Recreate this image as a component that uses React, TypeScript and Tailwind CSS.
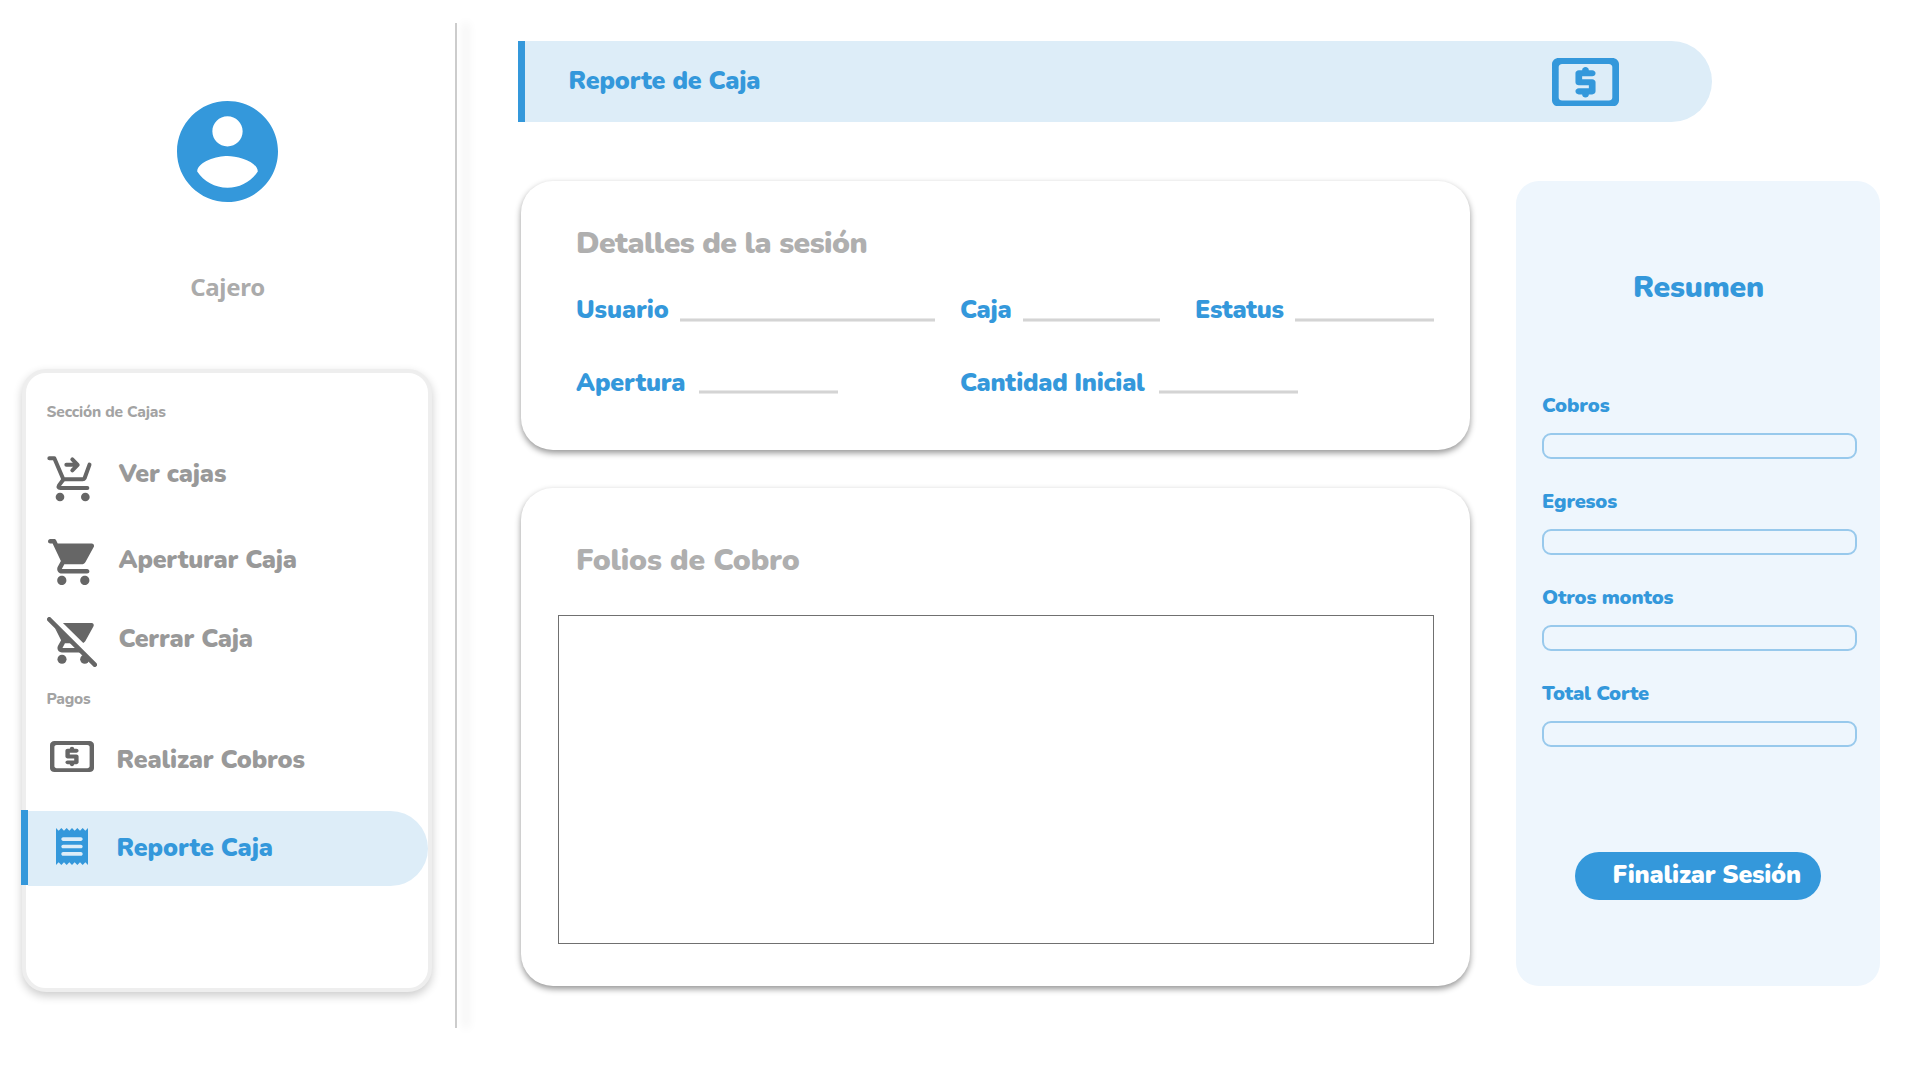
import React from "react";

function UserIcon() {
  return (
    <svg viewBox="2 2 20 20" className="h-[101px] w-[101px] fill-[#3498db]">
      <path
        fillRule="evenodd"
        d="M12 2C6.48 2 2 6.48 2 12s4.48 10 10 10 10-4.48 10-10S17.52 2 12 2zm0 3c1.66 0 3 1.34 3 3s-1.34 3-3 3-3-1.34-3-3 1.34-3 3-3zm0 14.2c-2.5 0-4.71-1.28-6-3.22.03-1.99 4-3.08 6-3.08 1.99 0 5.97 1.09 6 3.08-1.29 1.94-3.5 3.22-6 3.22z"
      />
    </svg>
  );
}

function CartArrowIcon() {
  return (
    <svg
      viewBox="140 317 138 138"
      className="h-[46px] w-[46px] shrink-0"
      fill="none"
      stroke="#666"
      strokeWidth="12"
      strokeLinecap="round"
      strokeLinejoin="round"
    >
      <path d="M147 324H162L189 387H247Q251 387 253 383L267.500 343" />
      <path d="M188 389L176 405Q172 413 180 413H261" />
      <path d="M198 343.500H231M216 327L232 343.500L216 360" />
      <circle cx="179" cy="440" r="13" fill="#666" stroke="none" />
      <circle cx="255" cy="440" r="13" fill="#666" stroke="none" />
    </svg>
  );
}

function CartIcon() {
  return (
    <svg viewBox="1 2 20 20" className="h-[46px] w-[46px] shrink-0 fill-[#666]">
      <path d="M7 18c-1.1 0-1.99.9-1.99 2S5.9 22 7 22s2-.9 2-2-.9-2-2-2zM1 3c0 .55.45 1 1 1h1l3.600 7.590-1.350 2.440C4.520 15.370 5.480 17 7 17h11c.55 0 1-.45 1-1s-.45-1-1-1H7l1.100-2h7.450c.75 0 1.410-.41 1.750-1.030l3.580-6.490c.37-.66-.11-1.480-.87-1.480H5.210l-.67-1.430c-.16-.35-.52-.57-.9-.57H2c-.55 0-1 .45-1 1zm16 15c-1.100 0-1.990.9-1.990 2s.89 2 1.990 2 2-.9 2-2-.9-2-2-2z" />
    </svg>
  );
}

function CartOffIcon() {
  return (
    <svg viewBox="0.400 1.400 22 22" className="h-[50px] w-[50px] shrink-0 fill-[#666]">
      <path d="M7.400 4H20c.77 0 1.240.82.87 1.480L17.300 11.970c-.2.360-.52.66-.95.830z" />
      <path d="M3.900 6.200L6.600 11.590 5.250 14.040C4.520 15.370 5.480 17 7 17H16l-2-2H7.200L8.300 13h3.400z" />
      <circle cx="7" cy="20" r="2" />
      <circle cx="17" cy="20" r="2" />
      <path d="M1.400 2.400L21.400 22.400" stroke="#666" strokeWidth="2" strokeLinecap="round" />
    </svg>
  );
}

function CashIcon({ className }: { className: string }) {
  return (
    <svg viewBox="2 4 20 16" preserveAspectRatio="none" className={className} fill="currentColor">
      <path d="M12 17c.55 0 1-.45 1-1h1c.55 0 1-.45 1-1v-3c0-.55-.45-1-1-1h-3v-1h3c.55 0 1-.45 1-1s-.45-1-1-1h-1c0-.55-.45-1-1-1s-1 .45-1 1h-1c-.55 0-1 .45-1 1v3c0 .55.45 1 1 1h3v1h-3c-.55 0-1 .45-1 1s.45 1 1 1h1c0 .55.45 1 1 1zm8-13H4c-1.110 0-1.990.89-1.990 2L2 18c0 1.110.89 2 2 2h16c1.110 0 2-.89 2-2V6c0-1.110-.89-2-2-2zm-1 14H5c-.55 0-1-.45-1-1V7c0-.55.45-1 1-1h14c.55 0 1 .45 1 1v10c0 .55-.45 1-1 1z" />
    </svg>
  );
}

function ReceiptIcon() {
  return (
    <svg
      viewBox="3 2 18 20"
      preserveAspectRatio="none"
      className="mt-[17px] ml-7 h-[37px] w-8 shrink-0 fill-[#3498db]"
    >
      <path
        fillRule="evenodd"
        d="M19.500 3.500L18 2l-1.500 1.500L15 2l-1.500 1.500L12 2l-1.500 1.500L9 2 7.500 3.500 6 2 4.500 3.500 3 2v20l1.500-1.500L6 22l1.500-1.500L9 22l1.500-1.500L12 22l1.500-1.500L15 22l1.500-1.500L18 22l1.500-1.500L21 22V2zM17 17H7c-.55 0-1-.45-1-1s.45-1 1-1h10c.55 0 1 .45 1 1s-.45 1-1 1zm0-4H7c-.55 0-1-.45-1-1s.45-1 1-1h10c.55 0 1 .45 1 1s-.45 1-1 1zm0-4H7c-.55 0-1-.45-1-1s.45-1 1-1h10c.55 0 1 .45 1 1s-.45 1-1 1z"
      />
    </svg>
  );
}

function Blank({ className }: { className: string }) {
  return <div className={`h-1 shrink-0 border-y border-[#e8e8e8] bg-[#d4d4d4] ${className}`} />;
}

function Sidebar() {
  return (
    <aside className="flex w-[455px] shrink-0 flex-col items-center pt-[101px]">
      <UserIcon />
      <p className="mt-[69px] font-['Noto_Sans',sans-serif] text-2xl leading-8 font-bold tracking-[-0.3px] text-[#ababab]">
        Cajero
      </p>
      <nav className="mt-[66px] ml-[22px] h-[623px] w-[410px] self-start rounded-3xl border-4 border-[#eee] bg-white pt-[29px] text-[25px] leading-[30px] font-black text-[#999] shadow-[0_4px_10px_rgba(0,0,0,0.2)]">
        <h2 className="pl-[20.5px] text-[15.5px] leading-5 font-extrabold tracking-[-0.15px] text-[#a3a3a3]">
          Sección de Cajas
        </h2>
        <a className="mt-8 flex h-[50px] pt-0.5 pl-[21px]">
          <CartArrowIcon />
          <span className="mt-[3px] ml-[25.5px] tracking-[-0.12px]">Ver cajas</span>
        </a>
        <a className="mt-[35px] flex h-[46px] pl-[22px]">
          <CartIcon />
          <span className="mt-1.5 ml-[24.5px] tracking-[-0.2px]">Aperturar Caja</span>
        </a>
        <a className="mt-8 flex h-[50px] pl-[21px]">
          <CartOffIcon />
          <span className="mt-[7px] ml-[21.5px] tracking-[-0.18px]">Cerrar Caja</span>
        </a>
        <h2 className="mt-[22px] pl-[20.5px] text-[15.5px] leading-5 font-extrabold tracking-[-0.2px] text-[#a3a3a3]">
          Pagos
        </h2>
        <a className="mt-8 flex h-8 pl-6">
          <CashIcon className="h-[31px] w-11 shrink-0 text-[#666]" />
          <span className="mt-1 ml-[22.5px] tracking-[-0.14px]">Realizar Cobros</span>
        </a>
        <a className="mt-[37px] -ml-[5px] flex h-[76px] text-[#3498db]">
          <span className="h-[75px] w-[7px] bg-[#3498db]" />
          <span className="mt-px flex h-[75px] flex-1 rounded-r-full bg-[#ddedf8]">
            <ReceiptIcon />
            <span className="mt-[22px] ml-[28.5px] tracking-[-0.06px]">Reporte Caja</span>
          </span>
        </a>
      </nav>
    </aside>
  );
}

function SessionCard() {
  return (
    <section className="h-[269px] rounded-[32px] bg-white pt-[45px] pl-[55px] shadow-[0_3px_6px_rgba(0,0,0,0.42)]">
      <h2 className="text-[30px] leading-9 font-black tracking-[-0.5px] text-[#afafaf]">
        Detalles de la sesión
      </h2>
      <div className="mt-[33px] flex h-[30px] text-[25px] leading-[30px] font-black whitespace-nowrap text-[#3498db]">
        <span className="w-[104px] tracking-[-0.08px]">Usuario</span>
        <Blank className="mt-[23px] w-[255px]" />
        <span className="ml-[25px] w-[63px] tracking-[-0.17px]">Caja</span>
        <Blank className="mt-[23px] w-[137px]" />
        <span className="ml-[35px] w-[100px] tracking-[-0.27px]">Estatus</span>
        <Blank className="mt-[23px] w-[139px]" />
      </div>
      <div className="mt-[43px] flex h-[30px] text-[25px] leading-[30px] font-black whitespace-nowrap text-[#3498db]">
        <span className="w-[123px] tracking-[-0.16px]">Apertura</span>
        <Blank className="mt-[22px] w-[139px]" />
        <span className="ml-[122px] w-[199px] tracking-[-0.25px]">Cantidad Inicial</span>
        <Blank className="mt-[22px] w-[139px]" />
      </div>
    </section>
  );
}

function FoliosCard() {
  return (
    <section className="mt-[38px] h-[498px] rounded-[32px] bg-white pt-[55px] shadow-[0_3px_6px_rgba(0,0,0,0.42)]">
      <h2 className="pl-[55px] text-[30px] leading-9 font-black tracking-[-0.18px] text-[#afafaf]">
        Folios de Cobro
      </h2>
      <div className="mt-[36px] ml-[37px] h-[329px] w-[876px] border border-[#707070]" />
    </section>
  );
}

const FIELDS = [
  { label: "Cobros", tracking: "tracking-[-0.05px]" },
  { label: "Egresos", tracking: "tracking-[-0.2px]" },
  { label: "Otros montos", tracking: "tracking-[-0.18px]" },
  { label: "Total Corte", tracking: "tracking-[-0.25px]" },
];

function Summary() {
  return (
    <section className="ml-[46px] h-[805px] w-[364px] rounded-[23px] bg-[#eef6fd] pt-[89px] text-[#3498db]">
      <h2 className="pl-[117px] text-[30px] leading-9 font-black tracking-[-0.15px]">Resumen</h2>
      <div className="mt-[88px] flex flex-col gap-[30px] pl-[26px]">
        {FIELDS.map((field) => (
          <label key={field.label} className="flex h-[66px] flex-col">
            <span className={`text-xl leading-6 font-black ${field.tracking}`}>{field.label}</span>
            <span className="mt-[15px] h-[26px] w-[315px] rounded-[9px] border-2 border-[#98c9ec]" />
          </label>
        ))}
      </div>
      <button className="mt-[104px] ml-[59px] flex h-12 w-[246px] rounded-full bg-[#3498db] pt-2 pl-[37.5px] text-[25px] leading-[30px] font-black tracking-[-0.2px] whitespace-nowrap text-white">
        Finalizar Sesión
      </button>
    </section>
  );
}

export default function App() {
  return (
    <div className="flex h-[1080px] w-[1920px] overflow-hidden bg-white font-['Nunito','Lato',sans-serif]">
      <Sidebar />
      <div className="mt-[23px] h-[1005px] w-0.5 shrink-0 bg-[#ccc] shadow-[10px_0_10px_rgba(0,0,0,0.16)]" />
      <main className="flex-1">
        <header className="mt-[41px] ml-[61px] flex h-[81px] w-[1194px] text-[#3498db]">
          <span className="w-[7px] bg-[#3498db]" />
          <div className="flex flex-1 rounded-r-full bg-[#ddedf8]">
            <h1 className="mt-[25px] ml-[43.5px] w-[983.5px] text-[25px] leading-[30px] font-black tracking-[-0.12px]">
              Reporte de Caja
            </h1>
            <CashIcon className="mt-[16.5px] h-[48.5px] w-[67px]" />
          </div>
        </header>
        <div className="mt-[59px] ml-16 flex">
          <div className="w-[949px]">
            <SessionCard />
            <FoliosCard />
          </div>
          <Summary />
        </div>
      </main>
    </div>
  );
}
